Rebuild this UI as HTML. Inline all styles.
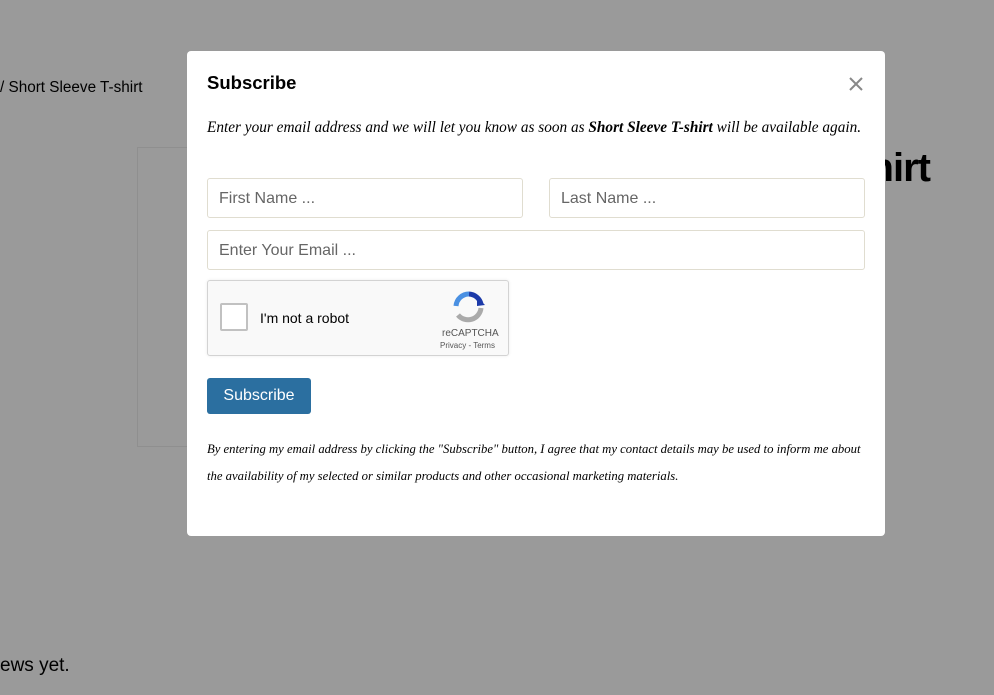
<!DOCTYPE html>
<html><head><meta charset="utf-8"><style>
html,body{margin:0;padding:0;width:994px;height:695px;overflow:hidden;background:#9a9a9a;font-family:"Liberation Sans",sans-serif;position:relative}
.bg{position:absolute;color:#000}
.modal{position:absolute;left:187px;top:51px;width:698px;height:485px;background:#fff;border-radius:4px}
.modal h2{position:absolute;left:20px;top:21px;margin:0;font-size:18.5px;font-weight:bold}
.close{position:absolute;left:660px;top:24px;width:18px;height:18px}
.intro{position:absolute;left:20px;top:68px;font-family:"Liberation Serif",serif;font-style:italic;font-size:15.3px;white-space:nowrap}
.in{position:absolute;height:40px;border:1px solid #e0ddd0;border-radius:3px;box-sizing:border-box;font-size:16px;color:#666;padding-left:11px;line-height:39px}
.cap{position:absolute;left:20px;top:229px;width:302px;height:76px;background:#f9f9f9;border:1px solid #d3d3d3;border-radius:3px;box-shadow:0 0 3px rgba(0,0,0,.08);box-sizing:border-box}
.cb{position:absolute;left:12px;top:22px;width:24px;height:24px;border:2px solid #c1c1c1;border-radius:2px;background:#fff}
.btn{position:absolute;left:20px;top:327px;width:104px;height:36px;background:#2b6fa0;border-radius:3px;color:#fff;font-size:16px;text-align:center;line-height:36px}
.disc{position:absolute;left:20px;top:385px;width:656px;font-family:"Liberation Serif",serif;font-style:italic;font-size:12.7px;line-height:27px}
</style></head><body>
<div class="bg" style="left:0;top:79px;font-size:15.3px">/ Short Sleeve T-shirt</div>
<div style="position:absolute;left:137px;top:147px;width:50px;height:298px;border:1px solid #8f8f8f;border-right:none"></div>
<div class="bg" style="right:64px;top:146px;font-size:40px;font-weight:bold;letter-spacing:-1px">Shirt</div>
<div class="bg" style="left:0;top:655px;font-size:19px">ews yet.</div>
<div class="modal">
<h2>Subscribe</h2>
<svg class="close" viewBox="0 0 18 18"><path d="M3 3L15 15M15 3L3 15" stroke="#888" stroke-width="2"/></svg>
<div class="intro">Enter your email address and we will let you know as soon as <b>Short Sleeve T-shirt</b> will be available again.</div>
<div class="in" style="left:20px;top:127px;width:316px">First Name ...</div>
<div class="in" style="left:362px;top:127px;width:316px">Last Name ...</div>
<div class="in" style="left:20px;top:179px;width:658px">Enter Your Email ...</div>
<div class="cap"><div class="cb"></div>
<div style="position:absolute;left:52px;top:29px;font-size:14px;color:#000">I'm not a robot</div>
<svg style="position:absolute;left:244px;top:10px" width="34" height="32" viewBox="0 0 34 32"><path d="M17 3A13 13 0 0 1 29 13" stroke="#1c3aa9" stroke-width="5" fill="none"/><path d="M4 15A13 13 0 0 1 17 3" stroke="#4a90e2" stroke-width="5" fill="none"/><path d="M29 17A13 13 0 0 1 6 24" stroke="#aaa" stroke-width="5" fill="none"/><path d="M25 6L33 14L25 15Z" fill="#1c3aa9"/></svg>
<div style="position:absolute;left:234px;top:47px;font-size:10px;color:#555">reCAPTCHA</div>
<div style="position:absolute;left:232px;top:60px;font-size:8px;color:#555">Privacy - Terms</div>
</div>
<div class="btn">Subscribe</div>
<div class="disc">By entering my email address by clicking the "Subscribe" button, I agree that my contact details may be used to inform me about the availability of my selected or similar products and other occasional marketing materials.</div>
</div>
</body></html>
